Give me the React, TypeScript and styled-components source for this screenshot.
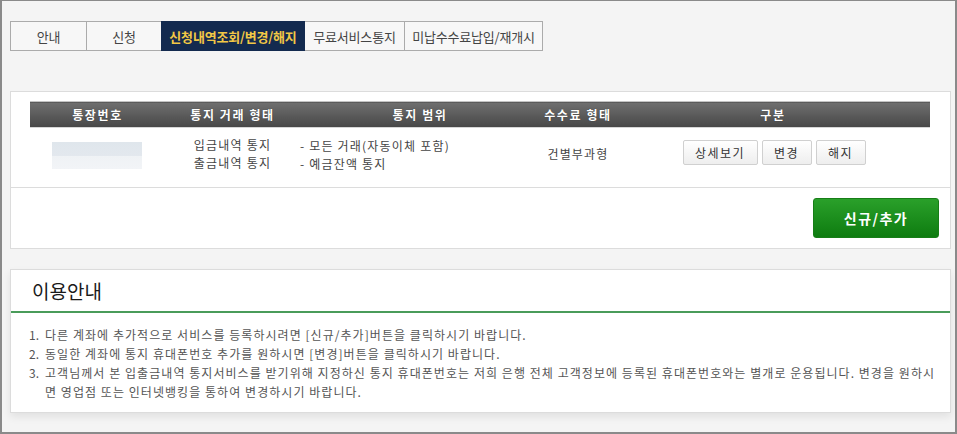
import React from "react";
import styled, { createGlobalStyle } from "styled-components";

const Global = createGlobalStyle`
  html, body { margin: 0; padding: 0; background: #f4f4f4; }
  * { box-sizing: border-box; }
  body { font-family: "Noto Sans CJK KR", "Noto Sans", "Liberation Sans", sans-serif; font-size: 12px; color: #333; }
`;

const Frame = styled.div`
  width: 957px;
  height: 434px;
  border: 2px solid #8a8a8a;
  border-top-width: 1px;
  background: #f4f4f4;
  padding: 20px 5px 0 8px;
  display: flex;
  flex-direction: column;
  overflow: hidden;
`;

const Tabs = styled.ul`
  display: flex;
  margin: 0;
  padding: 0;
  list-style: none;
`;

const Tab = styled.li<{ $w: number; $active?: boolean }>`
  width: ${(p) => p.$w}px;
  height: 30px;
  display: flex;
  align-items: center;
  justify-content: center;
  font-size: 13px;
  letter-spacing: -0.2px;
  border: 1px solid ${(p) => (p.$active ? "#132a4f" : "#ababab")};
  margin-left: -1px;
  &:first-child { margin-left: 0; }
  background: ${(p) => (p.$active ? "#132a4f" : "#f7f7f7")};
  color: ${(p) => (p.$active ? "#f2c845" : "#444")};
  font-weight: ${(p) => (p.$active ? 700 : 400)};
  position: relative;
  z-index: ${(p) => (p.$active ? 1 : 0)};
`;

const Panel = styled.section<{ $mt: number; $shadow?: boolean }>`
  width: 941px;
  margin-top: ${(p) => p.$mt}px;
  background: #fff;
  border: 1px solid #dcdcdc;
  box-shadow: ${(p) => (p.$shadow ? "0 4px 8px rgba(0,0,0,0.08)" : "none")};
`;

const TableWrap = styled.div`
  padding: 9px 19px 0;
`;

const Table = styled.table`
  width: 900px;
  border-collapse: collapse;
  table-layout: fixed;
`;

const Th = styled.th`
  height: 26px;
  padding: 0;
  color: #fff;
  font-size: 12px;
  font-weight: 700;
  letter-spacing: 1.6px;
  text-align: center;
  background: linear-gradient(#6f6f6f, #474747);
  border-top: 1px solid #c4c4c4;
  border-bottom: 1px solid #d6d6d6;
  text-shadow: 0 0 1px rgba(0, 0, 0, 0.4);
`;

const Td = styled.td<{ $align?: string }>`
  height: 59px;
  padding: 0 0 6px;
  text-align: ${(p) => p.$align || "center"};
  vertical-align: middle;
  color: #444;
  font-size: 12px;
  letter-spacing: 1.2px;
  line-height: 18px;
`;

const Masked = styled.div`
  width: 90px;
  height: 27px;
  margin: 2px 0 0 22px;
  background: linear-gradient(#dfe6ec 0, #e3e8ee 52%, #eff2f5 52%, #f2f4f7 100%);
`;

const Scope = styled.div`
  padding-top: 2px;
`;

const Actions = styled.div`
  display: flex;
  justify-content: center;
  gap: 4px;
  padding-left: 2px;
  margin-top: -3px;
`;

const SmallBtn = styled.button<{ $w: number }>`
  width: ${(p) => p.$w}px;
  height: 25px;
  padding: 0;
  border: 1px solid #d0d0d0;
  border-radius: 2px;
  background: linear-gradient(#ffffff, #eeeeee);
  font-family: inherit;
  font-size: 12px;
  letter-spacing: 1.4px;
  color: #333;
  cursor: pointer;
`;

const Divider = styled.div`
  border-top: 1px solid #dcdcdc;
`;

const Footer = styled.div`
  display: flex;
  justify-content: flex-end;
  padding: 10px 11px 10px 0;
`;

const PrimaryBtn = styled.button`
  width: 126px;
  height: 40px;
  border: 1px solid #177e17;
  border-radius: 3px;
  background: linear-gradient(#2aa02a, #0e7c10);
  color: #fff;
  font-family: inherit;
  font-size: 14px;
  font-weight: 700;
  letter-spacing: 1.5px;
  cursor: pointer;
`;

const NoticeTitle = styled.h2`
  margin: 0;
  height: 43px;
  padding: 0 0 0 21px;
  display: flex;
  align-items: center;
  font-size: 19px;
  font-weight: 400;
  color: #1a1a1a;
  border-bottom: 2px solid #4a9c5a;
`;

const NoticeList = styled.ol`
  margin: 0;
  padding: 12px 10px 11px 18px;
  list-style: none;
  color: #555;
  font-size: 12px;
  letter-spacing: 1.05px;
  line-height: 19px;
`;

const NoticeItem = styled.li`
  display: flex;
`;

const Num = styled.span`
  flex: 0 0 16px;
  letter-spacing: 0;
`;

const Body = styled.span`
  flex: 1;
`;

const notices = [
  "다른 계좌에 추가적으로 서비스를 등록하시려면 [신규/추가]버튼을 클릭하시기 바랍니다.",
  "동일한 계좌에 통지 휴대폰번호 추가를 원하시면 [변경]버튼을 클릭하시기 바랍니다.",
  "고객님께서 본 입출금내역 통지서비스를 받기위해 지정하신 통지 휴대폰번호는 저희 은행 전체 고객정보에 등록된 휴대폰번호와는 별개로 운용됩니다. 변경을 원하시면 영업점 또는 인터넷뱅킹을 통하여 변경하시기 바랍니다.",
];

export default function App() {
  return (
    <>
      <Global />
      <Frame>
        <Tabs>
          <Tab $w={77}>안내</Tab>
          <Tab $w={76}>신청</Tab>
          <Tab $w={144} $active>
            신청내역조회/변경/해지
          </Tab>
          <Tab $w={101}>무료서비스통지</Tab>
          <Tab $w={139}>미납수수료납입/재개시</Tab>
        </Tabs>

        <Panel $mt={40}>
          <TableWrap>
            <Table>
              <colgroup>
                <col style={{ width: 135 }} />
                <col style={{ width: 135 }} />
                <col style={{ width: 240 }} />
                <col style={{ width: 76 }} />
                <col style={{ width: 314 }} />
              </colgroup>
              <thead>
                <tr>
                  <Th>통장번호</Th>
                  <Th>통지 거래 형태</Th>
                  <Th>통지 범위</Th>
                  <Th>수수료 형태</Th>
                  <Th>구분</Th>
                </tr>
              </thead>
              <tbody>
                <tr>
                  <Td>
                    <Masked />
                  </Td>
                  <Td>
                    입금내역 통지
                    <br />
                    출금내역 통지
                  </Td>
                  <Td $align="left">
                    <Scope>
                      - 모든 거래(자동이체 포함)
                      <br />- 예금잔액 통지
                    </Scope>
                  </Td>
                  <Td>건별부과형</Td>
                  <Td>
                    <Actions>
                      <SmallBtn $w={75}>상세보기</SmallBtn>
                      <SmallBtn $w={50}>변경</SmallBtn>
                      <SmallBtn $w={50}>해지</SmallBtn>
                    </Actions>
                  </Td>
                </tr>
              </tbody>
            </Table>
          </TableWrap>
          <Divider />
          <Footer>
            <PrimaryBtn>신규/추가</PrimaryBtn>
          </Footer>
        </Panel>

        <Panel $mt={20} $shadow>
          <NoticeTitle>이용안내</NoticeTitle>
          <NoticeList>
            {notices.map((t, i) => (
              <NoticeItem key={i}>
                <Num>{i + 1}.</Num>
                <Body>{t}</Body>
              </NoticeItem>
            ))}
          </NoticeList>
        </Panel>
      </Frame>
    </>
  );
}
